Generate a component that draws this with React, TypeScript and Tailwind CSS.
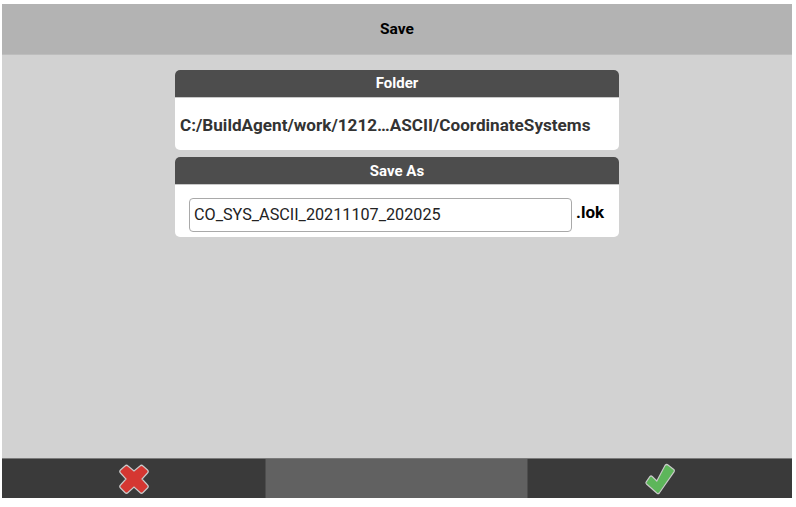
import React from 'react';

function CancelIcon() {
  return (
    <svg width="32" height="32" viewBox="0 0 32 32">
      <path
        d="M10 3 L16 8 L22 3 Q23.5 1.5 25 3 L29.5 7 Q31 8.500 29.500 10 L24 16 L29.500 22 Q31 23.500 29.500 25 L25 29.500 Q23.500 31 22 29.500 L16 24 L10 29.500 Q8.500 31 7 29.500 L2.500 25 Q1 23.500 2.500 22 L8 16 L2.500 10 Q1 8.500 2.500 7 L7 3 Q8.500 1.500 10 3 Z"
        fill="#d53732"
        stroke="#c9c9c9"
        strokeWidth="1.2"
      />
    </svg>
  );
}

function ConfirmIcon() {
  return (
    <svg width="32" height="32" viewBox="0 0 32 32">
      <path
        d="M21 2.500 Q22.500 0.800 24 2 L29.800 6.500 Q30.800 7.500 30 8.800 L15.300 30 Q14.300 31.200 13 30.200 L2.500 21 Q1.500 20 2.300 18.800 L6 13.500 Q7 12.500 8.200 13.500 L12.800 18 Z"
        fill="#5db65a"
        stroke="#c9c9c9"
        strokeWidth="1.2"
      />
    </svg>
  );
}

export default function App() {
  return (
    <div className="w-[796px] h-[507px] bg-white pt-[4px] pl-[2px] pb-[9px] font-['Roboto',sans-serif]">
      <div className="w-[790px] h-[494px] flex flex-col bg-[#d2d2d2]">
        {/* Title */}
        <div className="h-[51px] pt-[2px] shrink-0 flex items-center justify-center bg-[#b3b3b3] border-b border-[#bdbdbd] text-[15.5px] font-bold text-black">
          Save
        </div>

        <div className="flex-1 flex flex-col items-center pt-[15px] gap-[7px]">
          {/* Folder */}
          <div className="w-[444px] h-[80px] rounded-[5px] bg-white overflow-hidden">
            <div className="h-[28px] flex items-center justify-center bg-[#4d4d4d] border-b border-[#c8c8c8] text-[15px] font-bold text-white">
              Folder
            </div>
            <div className="h-[52px] pl-[5px] pt-[3px] flex items-center text-[17.12px] font-bold text-[#333333] whitespace-nowrap">
              C:/BuildAgent/work/1212…ASCII/CoordinateSystems
            </div>
          </div>

          {/* Save As */}
          <div className="w-[444px] h-[80px] rounded-[5px] bg-white overflow-hidden">
            <div className="h-[28px] pt-[1px] flex items-center justify-center bg-[#4d4d4d] border-b border-[#c8c8c8] text-[15px] font-bold text-white">
              Save As
            </div>
            <div className="flex pl-[14px] pt-[13px]">
              <input
                readOnly
                value="CO_SYS_ASCII_20211107_202025"
                className="w-[383px] h-[34px] px-[4px] pb-[2px] rounded-[4px] border border-[#a9a9a9] bg-white text-[16.2px] text-[#222222] outline-none"
              />
              <span className="ml-[4px] -mt-[3px] text-[17px] leading-[34px] font-bold text-black">.lok</span>
            </div>
          </div>
        </div>

        {/* Footer */}
        <div className="h-[40px] shrink-0 flex bg-[#3a3a3a] border-t border-[#7a7a7a]">
          <button className="w-[263px] flex items-center justify-center">
            <CancelIcon />
          </button>
          <div className="w-[263px] bg-[#616161] border-x border-[#4d4d4d]"></div>
          <button className="flex-1 pr-[1px] flex items-center justify-center">
            <ConfirmIcon />
          </button>
        </div>
      </div>
    </div>
  );
}
